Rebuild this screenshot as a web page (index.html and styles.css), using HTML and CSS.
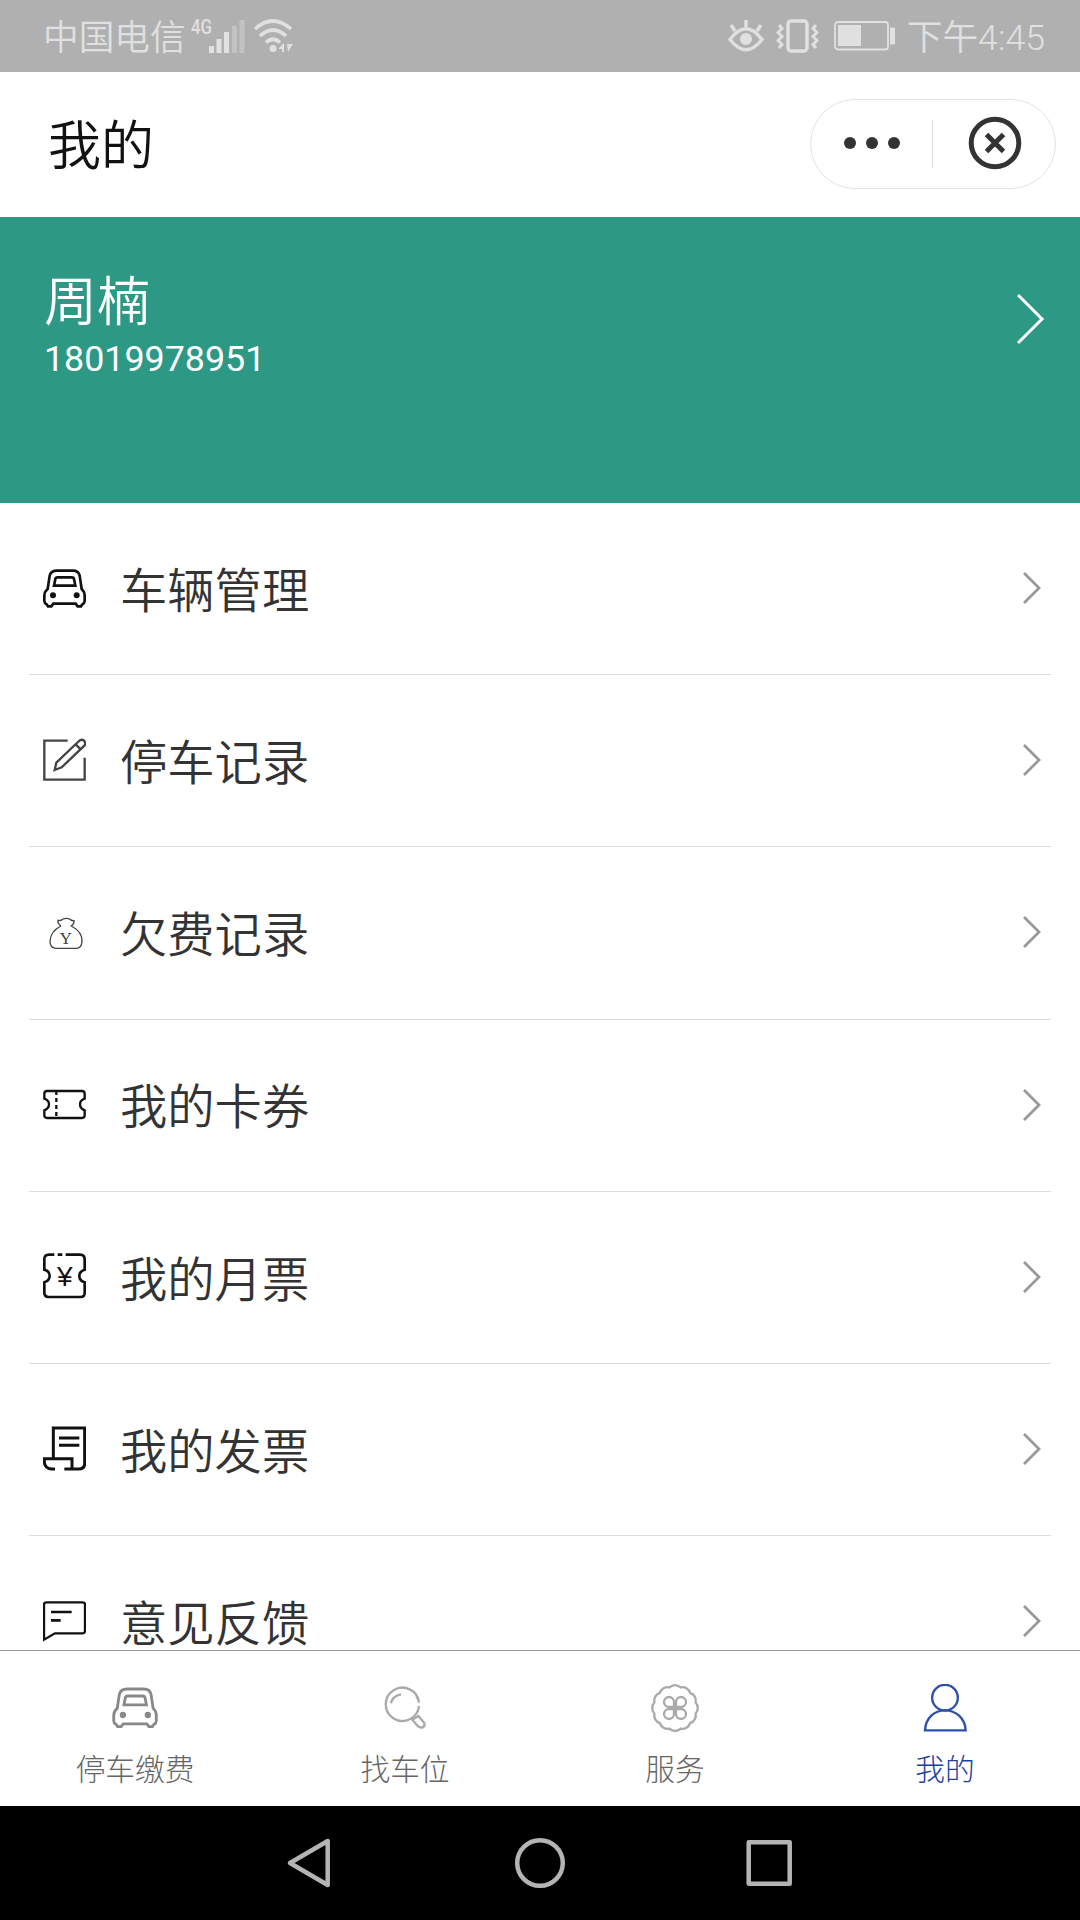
FILE: index.html
```html
<!DOCTYPE html>
<html lang="zh-CN">
<head>
	<meta charset="UTF-8">
	<title>我的</title>
	<link rel="stylesheet" href="styles.css">
</head>
<body>
	<div class="status">
		<span class="status__text">中国电信</span>
		<span class="status__net">4G</span>
		<svg class="status__signal" width="36" height="34" viewBox="0 0 36 34">
			<path d="M0 27h5v7H0zM7.500 20h5v14h-5zM15 13h5v21h-5z"/>
			<path class="dim" d="M23 7h5v27h-5zM30.500 1h5v33h-5z"/>
		</svg>
		<svg class="status__wifi line" width="42" height="34" viewBox="0 0 42 34">
			<path d="M2 10Q20 -6 38 10M7 17Q20 5 33 17M13 23.500Q20 17 27 23.500" stroke-width="3.600"/>
			<circle class="fill" cx="20" cy="29.500" r="3.500"/>
			<path class="fill" d="M26 29l5-5v9h-2v-3h-3zM34 25l6 0-5 8z"/>
		</svg>
		<span class="status__space"></span>
		<svg class="status__eye line" width="36" height="34" viewBox="0 0 36 34">
			<path d="M2 20.500Q18 -1 34 20.500Q18 41 2 20.500Z" stroke-width="3.500"/>
			<path d="M18 8V1M7 12L3 6M29 12L33 6" stroke-width="3.500"/>
			<circle class="fill" cx="18" cy="20" r="6"/>
		</svg>
		<svg class="status__vibrate line" width="43" height="34" viewBox="0 0 43 34">
			<rect x="12" y="2" width="19" height="30" rx="3" stroke-width="3.500"/>
			<path d="M3 6l3 3.500-4 4 4 4-4 4 4 4-3 3.500M40 6l-3 3.500 4 4-4 4 4 4-4 4 3 3.500" stroke-width="3"/>
		</svg>
		<svg class="status__battery line" width="62" height="30" viewBox="0 0 62 30">
			<rect x="1" y="1" width="53" height="27.500" rx="3" stroke-width="1.800"/>
			<path class="fill" d="M4 4h23v21H4zM56 6.500h5v17h-5z"/>
		</svg>
		<span class="status__text">下午4:45</span>
	</div>

	<div class="header">
		<h1 class="header__title">我的</h1>
		<div class="capsule">
			<svg class="capsule__dots" width="56" height="14" viewBox="0 0 56 14">
				<circle cx="6" cy="7" r="6"/>
				<circle cx="28" cy="7" r="6"/>
				<circle cx="50" cy="7" r="6"/>
			</svg>
			<span class="capsule__line"></span>
			<svg class="capsule__close" width="54" height="54" viewBox="0 0 54 54">
				<circle cx="27" cy="27" r="23.800"/>
				<path d="M18.500 18.500l17 17M35.500 18.500l-17 17"/>
			</svg>
		</div>
	</div>

	<div class="user">
		<div class="user__info">
			<p class="user__name">周楠</p>
			<p class="user__phone">18019978951</p>
		</div>
		<svg class="user__arrow" width="30" height="52" viewBox="0 0 30 52">
			<path d="M3 2L27 26L3 50"/>
		</svg>
	</div>

	<div class="list">
		<div class="list__item">
			<svg class="list__icon black" width="43" height="48" viewBox="0 0 129 144">
				<g id="car" stroke-width="8">
					<path d="M42 17H90Q106 17 110 32L116 72Q125 80 125 92V108Q125 114 118 118L114 124H104L98 116H31L25 124H15L11 118Q4 114 4 108V92Q4 80 14 72L20 32Q24 17 42 17Z"/>
					<path d="M43 37H87Q92 37 93 42L97 62H33L37 42Q38 37 43 37Z"/>
					<circle class="fill" cx="30" cy="91" r="9"/>
					<circle class="fill" cx="101" cy="91" r="9"/>
				</g>
			</svg>
			<span class="list__text">车辆管理</span>
			<svg class="list__arrow" width="20" height="34" viewBox="0 0 20 34"><path d="M2 2L17 17L2 32"/></svg>
		</div>
		<div class="list__item">
			<svg class="list__icon" width="43" height="48" viewBox="0 0 129 144">
				<path d="M74 11H4V128H125V62" stroke-width="7"/>
				<path d="M35 99L40 77L108 12Q116 5 123 11Q130 18 124 26L56 91ZM98 22L113 37" stroke-width="7"/>
			</svg>
			<span class="list__text">停车记录</span>
			<svg class="list__arrow" width="20" height="34" viewBox="0 0 20 34"><path d="M2 2L17 17L2 32"/></svg>
		</div>
		<div class="list__item">
			<svg class="list__icon" width="43" height="48" viewBox="0 0 129 144">
				<path d="M54 51Q42 42 45 34Q55 36 60 30Q70 26 80 30Q85 36 93 35Q95 43 85 51C102 60 118 74 117 97Q116 118 100 118H38Q21 116 21 97C22 75 36 60 54 51" stroke-width="4"/>
				<text class="list__yuan" x="68" y="105">Y</text>
			</svg>
			<span class="list__text">欠费记录</span>
			<svg class="list__arrow" width="20" height="34" viewBox="0 0 20 34"><path d="M2 2L17 17L2 32"/></svg>
		</div>
		<div class="list__item">
			<svg class="list__icon black" width="43" height="48" viewBox="0 0 129 144">
				<path d="M12 30H117Q125 30 125 38V53q-14 5-14 17q0 13 14 18V103Q125 111 117 111H12Q4 111 4 103V88q14-5 14-18q0-12-14-17V38Q4 30 12 30Z" stroke-width="7"/>
				<path d="M40 30V111" stroke-width="7" stroke-dasharray="12 9"/>
			</svg>
			<span class="list__text">我的卡券</span>
			<svg class="list__arrow" width="20" height="34" viewBox="0 0 20 34"><path d="M2 2L17 17L2 32"/></svg>
		</div>
		<div class="list__item">
			<svg class="list__icon black" width="43" height="48" viewBox="0 0 129 144">
				<path d="M34 5H18Q4 5 4 19V50q16 4 16 18q0 14-16 20V118Q4 132 16 132H113Q125 132 125 120V88q-16-5-16-19q0-14 16-19V19Q125 5 111 5H68M44 5H58" stroke-width="8"/>
				<text class="list__yen" x="65" y="98">¥</text>
			</svg>
			<span class="list__text">我的月票</span>
			<svg class="list__arrow" width="20" height="34" viewBox="0 0 20 34"><path d="M2 2L17 17L2 32"/></svg>
		</div>
		<div class="list__item">
			<svg class="list__icon black" width="43" height="48" viewBox="0 0 129 144">
				<path d="M31 101V9H125V118Q123 132 108 132H64M36 132H24Q6 130 4 112V101H87V130" stroke-width="9"/>
				<path d="M48 39H109M48 61H109" stroke-width="9"/>
			</svg>
			<span class="list__text">我的发票</span>
			<svg class="list__arrow" width="20" height="34" viewBox="0 0 20 34"><path d="M2 2L17 17L2 32"/></svg>
		</div>
		<div class="list__item">
			<svg class="list__icon black" width="43" height="48" viewBox="0 0 129 144">
				<path d="M10 13H119Q126 13 126 20V99Q126 106 119 106H36L3 125V20Q3 13 10 13Z" stroke-width="7"/>
				<path d="M24 42H86M24 67H53" stroke-width="8"/>
			</svg>
			<span class="list__text">意见反馈</span>
			<svg class="list__arrow" width="20" height="34" viewBox="0 0 20 34"><path d="M2 2L17 17L2 32"/></svg>
		</div>
	</div>

	<div class="tabs">
		<div class="tabs__item">
			<svg class="tabs__icon" width="48" height="48" viewBox="0 0 144 144">
				<use href="#car" transform="translate(4 -3) scale(1.055)"/>
			</svg>
			<span>停车缴费</span>
		</div>
		<div class="tabs__item">
			<svg class="tabs__icon light" width="48" height="48" viewBox="0 0 144 144">
				<path d="M114 56A50 50 0 1 0 114 66M112 48A50 50 0 0 0 106 36M30 58Q34 36 60 31"/>
				<path d="M94 107L110 126Q117 132 125 130Q133 126 130 117L112 96Z"/>
			</svg>
			<span>找车位</span>
		</div>
		<div class="tabs__item">
			<svg class="tabs__icon light" width="48" height="48" viewBox="0 0 144 144">
				<path d="M133.800 88.600A24 24 0 0 1 117.300 117.300A24 24 0 0 1 88.600 133.800A24 24 0 0 1 55.400 133.800A24 24 0 0 1 26.700 117.300A24 24 0 0 1 10.200 88.600A24 24 0 0 1 10.200 55.400A24 24 0 0 1 26.700 26.700A24 24 0 0 1 55.400 10.200A24 24 0 0 1 88.600 10.200A24 24 0 0 1 117.300 26.700A24 24 0 0 1 133.800 55.400A24 24 0 0 1 133.800 88.600Z"/>
				<g stroke-width="7">
					<path id="petal" d="M69 69H54A15 15 0 1 1 69 54Z"/>
					<use href="#petal" transform="rotate(90 72 72)"/>
					<use href="#petal" transform="rotate(180 72 72)"/>
					<use href="#petal" transform="rotate(270 72 72)"/>
				</g>
			</svg>
			<span>服务</span>
		</div>
		<div class="tabs__item active">
			<svg class="tabs__icon" width="48" height="48" viewBox="0 0 144 144">
				<circle cx="72" cy="41" r="38.500"/>
				<path d="M12 139C14 102 40 79 72 79S132 102 134 139Z"/>
			</svg>
			<span>我的</span>
		</div>
	</div>

	<div class="nav">
		<svg width="50" height="54" viewBox="0 0 50 54"><path d="M41.700 5V49L4 27Z"/></svg>
		<svg width="54" height="54" viewBox="0 0 54 54"><circle cx="27" cy="27" r="22.800"/></svg>
		<svg width="50" height="54" viewBox="0 0 50 54"><rect x="4.700" y="6.200" width="41" height="41.500"/></svg>
	</div>
</body>
</html>
```
FILE: styles.css
```css
* {
	box-sizing: border-box;
	margin: 0;
	padding: 0;
}
body {
	display: flex;
	flex-direction: column;
	width: 1080px;
	height: 1920px;
	overflow: hidden;
	background-color: #fff;
	font-family: Roboto, "Noto Sans CJK SC", sans-serif;
	font-weight: 350;
}
svg {
	display: block;
	flex: none;
	fill: none;
}
.fill {
	fill: currentColor;
	stroke: none;
}

.status {
	display: flex;
	align-items: center;
	flex: none;
	height: 72px;
	padding: 0 35px 0 43px;
	background-color: #b0b0b0;
	color: #e0e0e0;
}
.status__text {
	padding-top: 5px;
	font-size: 35.700px;
	line-height: 67px;
	white-space: nowrap;
}
.status__net {
	width: 20px;
	margin-left: 5px;
	padding-bottom: 18px;
	font-size: 21px;
	font-weight: 500;
	transform: scaleX(.8);
	transform-origin: left;
}
.status__signal {
	margin-left: -2px;
	fill: #e0e0e0;
}
.status__signal .dim {
	fill: #c2c2c2;
}
.status__wifi {
	margin-left: 8px;
}
.status__space {
	flex: 1;
}
.status .line {
	stroke: #e0e0e0;
}
.status__vibrate {
	margin-left: 12px;
}
.status__battery {
	margin: 0 11px 0 15px;
}

.header {
	display: flex;
	align-items: center;
	justify-content: space-between;
	flex: none;
	height: 145px;
	padding: 0 24px 2px 48px;
}
.header__title {
	padding-bottom: 4px;
	color: #111;
	font-size: 53px;
	font-weight: 350;
}
.capsule {
	display: flex;
	align-items: center;
	width: 246px;
	height: 90px;
	border: 1px solid #e2e2e2;
	border-radius: 45px;
}
.capsule__dots {
	margin-top: -1px;
	margin-left: 33px;
	fill: #333;
}
.capsule__line {
	width: 1px;
	height: 48px;
	margin: 0 35px 0 32px;
	background-color: #ddd;
}
.capsule__close {
	margin-top: -1px;
	stroke: #333;
	stroke-width: 5;
}

.user {
	display: flex;
	justify-content: space-between;
	flex: none;
	height: 286px;
	padding: 56px 35px 0 44px;
	background-color: #2d9884;
	color: #fff;
}
.user__name {
	font-size: 53px;
	line-height: 60px;
}
.user__phone {
	margin-top: 5px;
	font-size: 35.800px;
	font-weight: 400;
	line-height: 42px;
}
.user__arrow {
	margin-top: 20px;
	stroke: #fff;
	stroke-width: 3;
}

.list {
	flex: 1;
	min-height: 0;
	padding: 0 29px;
	overflow: hidden;
}
.list__item {
	display: flex;
	align-items: center;
	height: 172.180px;
	padding: 0 9px 0 14px;
	border-bottom: 1px solid #ddd;
}
.list__icon {
	color: #444;
	stroke: #444;
}
.list__icon.black {
	color: #111;
	stroke: #111;
}
.list__yuan,
.list__yen {
	fill: currentColor;
	stroke: none;
	text-anchor: middle;
}
.list__yuan {
	font-family: "Liberation Serif", serif;
	font-size: 52px;
}
.list__yen {
	font-family: "Liberation Sans", sans-serif;
	font-size: 84px;
}
.list__text {
	flex: 1;
	margin-left: 34px;
	padding-top: 8px;
	color: #333;
	font-size: 47.300px;
	line-height: 1;
}
.list__arrow {
	margin-top: -1px;
	stroke: #999;
	stroke-width: 2.800;
}

.tabs {
	display: flex;
	flex: none;
	height: 156px;
	border-top: 1px solid #999;
	background-color: #fff;
}
.tabs__item {
	display: flex;
	flex-direction: column;
	align-items: center;
	flex: 1;
	padding-top: 33px;
	color: #666;
	font-size: 29.700px;
	font-weight: 300;
	line-height: 40px;
}
.tabs__icon {
	margin-bottom: 18px;
	color: #888;
	stroke: #888;
	stroke-width: 7;
}
.tabs__icon.light {
	stroke: #aaa;
}
.tabs__item.active {
	color: #1c419e;
}
.active .tabs__icon {
	stroke: #2c50ab;
}

.nav {
	display: flex;
	align-items: center;
	justify-content: center;
	gap: 177px;
	flex: none;
	height: 114px;
	background-color: #000;
	stroke: #b4b4b4;
	stroke-width: 4.500;
	stroke-linejoin: round;
}
```
